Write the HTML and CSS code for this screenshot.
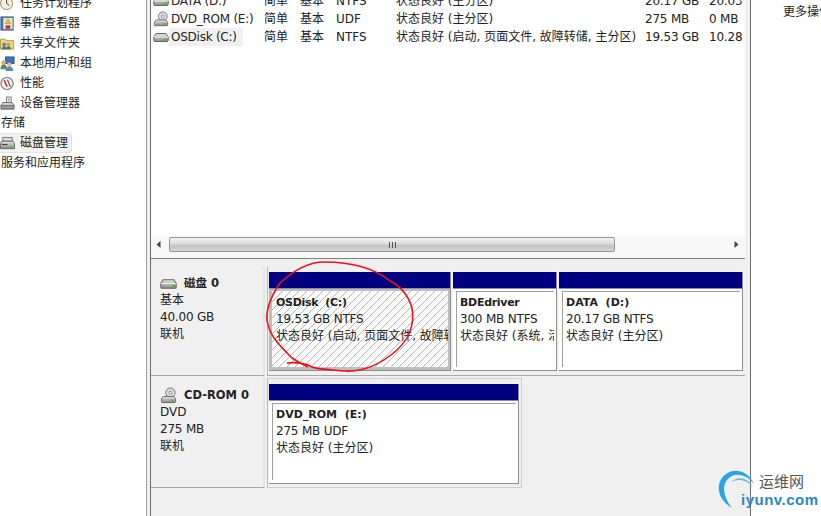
FILE: index.html
```html
<!DOCTYPE html>
<html lang="zh-CN">
<head>
<meta charset="utf-8">
<title>磁盘管理</title>
<link rel="stylesheet" href="styles.css">
</head>
<body>
<svg class="defs" width="0" height="0" aria-hidden="true">
  <defs>
    <linearGradient id="hdd" x1="0" y1="0" x2="0" y2="1">
      <stop offset="0" stop-color="#e8e8e8"/><stop offset=".5" stop-color="#b8b8b8"/><stop offset="1" stop-color="#8a8a8a"/>
    </linearGradient>
    <symbol id="disk" viewBox="0 0 16 16">
      <path d="M3 4.500h10l2.200 3.500v3.500a1 1 0 0 1-1 1H1.800a1 1 0 0 1-1-1V8z" fill="url(#hdd)" stroke="#666"/>
      <path d="M1 8h14" stroke="#f4f4f4"/>
      <rect x="11" y="9.500" width="3" height="2" fill="#5cb82c"/>
    </symbol>
    <symbol id="cdrom" viewBox="0 0 16 18">
      <circle cx="10" cy="6" r="5" fill="#dcd6e6" stroke="#777"/>
      <circle cx="10" cy="6" r="1.500" fill="#fff" stroke="#888"/>
      <path d="M2.500 10h11l2 2.500v3a1 1 0 0 1-1 1h-13a1 1 0 0 1-1-1v-3z" fill="url(#hdd)" stroke="#666"/>
      <rect x="11" y="13.500" width="3" height="2" fill="#5cb82c"/>
    </symbol>
  </defs>
</svg>

<div class="app">
  <nav class="tree">
    <div class="tree-row">
      <svg class="tree-icon" viewBox="0 0 16 16"><circle cx="7" cy="8" r="6.500" fill="#f5efd9" stroke="#8a8468"/><path d="M7 3.500V8l3 2" fill="none" stroke="#444"/></svg>
      <span>任务计划程序</span>
    </div>
    <div class="tree-row">
      <svg class="tree-icon" viewBox="0 0 16 16"><rect x="1" y="1" width="13" height="14" fill="#4a78b8" stroke="#34527c"/><rect x="3.500" y="2" width="10" height="12" fill="#e8e4d0"/><path d="M8.500 3l3 5h-6z" fill="#f2c21c" stroke="#a8851a" stroke-width=".5"/><rect x="6" y="10" width="5" height="3.500" fill="#c03030"/></svg>
      <span>事件查看器</span>
    </div>
    <div class="tree-row">
      <svg class="tree-icon" viewBox="0 0 16 16"><path d="M0.500 3.500h5l1 1.500h8v9h-14z" fill="#f0d680" stroke="#b49540"/><circle cx="4.500" cy="9" r="2" fill="#5f86b5"/><path d="M2 14c0-2 1-3 2.500-3S7 12 7 14z" fill="#4a6f9a"/><circle cx="9" cy="9" r="2" fill="#c9a15f"/><path d="M6.500 14c0-2 1-3 2.500-3s2.500 1 2.500 3z" fill="#3d7f55"/></svg>
      <span>共享文件夹</span>
    </div>
    <div class="tree-row">
      <svg class="tree-icon" viewBox="0 0 16 16"><rect x="6" y="1" width="9" height="7" fill="#3d74c4" stroke="#3c4f70"/><circle cx="4" cy="7" r="2.500" fill="#d6a878"/><path d="M0.500 14c0-3.500 1.500-5 3.500-5s3.500 1.500 3.500 5z" fill="#5a8a54"/><circle cx="10" cy="9.500" r="2.500" fill="#e2bd92"/><path d="M6 16c0-3.500 1.500-4.500 4-4.500s4 1 4 4.500z" fill="#5b84c0"/></svg>
      <span>本地用户和组</span>
    </div>
    <div class="tree-row">
      <svg class="tree-icon" viewBox="0 0 16 16"><circle cx="7.500" cy="8" r="6.500" fill="#f3f1ec" stroke="#8d8d8d" stroke-width="1.500"/><path d="M4.500 4.500l3 7" stroke="#c62020" stroke-width="1.500"/><path d="M8 4l3 7.500" stroke="#2a2a2a"/></svg>
      <span>性能</span>
    </div>
    <div class="tree-row">
      <svg class="tree-icon" viewBox="0 0 16 16"><rect x="7" y="1" width="5" height="6" fill="#e6efe6" stroke="#808080"/><path d="M9.500 2.500v3" stroke="#4aa04a"/><path d="M3 7h10l2 3v4H1v-4z" fill="url(#hdd)" stroke="#666"/><path d="M1 10.500h14" stroke="#555"/></svg>
      <span>设备管理器</span>
    </div>
    <div class="tree-row tree-root"><span>存储</span></div>
    <div class="tree-row">
      <div class="tree-chip">
        <svg class="tree-icon" viewBox="0 0 16 16"><rect x="3" y="1.500" width="10" height="4" fill="#ddd" stroke="#777"/><path d="M2 5.500h12l1.500 3v5h-15v-5z" fill="url(#hdd)" stroke="#666"/><path d="M2 9h6" stroke="#333"/><rect x="11" y="10.500" width="3" height="1.500" fill="#5cb82c"/></svg>
        <span>磁盘管理</span>
      </div>
    </div>
    <div class="tree-row tree-root"><span>服务和应用程序</span></div>
  </nav>

  <div class="splitter"></div>

  <main class="center">
    <section class="volumes">
      <div class="vol-row">
        <div class="vol-name"><svg class="vol-icon"><use href="#disk"/></svg><span class="vol-label">DATA (D:)</span></div>
        <span>简单</span><span>基本</span><span>NTFS</span><span>状态良好 (主分区)</span><span class="num">20.17 GB</span><span class="num clip">20.03 GB</span>
      </div>
      <div class="vol-row">
        <div class="vol-name"><svg class="vol-icon"><use href="#cdrom"/></svg><span class="vol-label">DVD_ROM (E:)</span></div>
        <span>简单</span><span>基本</span><span>UDF</span><span>状态良好 (主分区)</span><span class="num">275 MB</span><span class="num clip">0 MB</span>
      </div>
      <div class="vol-row">
        <div class="vol-name"><svg class="vol-icon"><use href="#disk"/></svg><span class="vol-label vol-current">OSDisk (C:)</span></div>
        <span>简单</span><span>基本</span><span>NTFS</span><span>状态良好 (启动, 页面文件, 故障转储, 主分区)</span><span class="num">19.53 GB</span><span class="num clip">10.28 GB</span>
      </div>
    </section>

    <div class="hscroll">
      <svg class="arrow" viewBox="0 0 5 7"><path d="M4.500 0v7L0.500 3.500z" fill="#444"/></svg>
      <div class="track">
        <div class="thumb"><span class="grip"></span></div>
      </div>
      <svg class="arrow" viewBox="0 0 5 7"><path d="M0.500 0v7l4-3.500z" fill="#444"/></svg>
    </div>

    <section class="disks">
      <div class="disk">
        <div class="disk-info">
          <div class="disk-title"><svg class="disk-icon"><use href="#disk"/></svg><b>磁盘 0</b></div>
          <div>基本</div><div class="num">40.00 GB</div><div>联机</div>
        </div>
        <div class="parts parts-full">
          <div class="part part-c selected">
            <div class="part-head"></div>
            <div class="part-body"><b class="tight">OSDisk&nbsp; (C:)</b><span class="num">19.53 GB NTFS</span><span>状态良好 (启动, 页面文件, 故障转储, 主分区)</span></div>
          </div>
          <div class="part part-b">
            <div class="part-head"></div>
            <div class="part-body"><b class="tight">BDEdriver</b><span class="num">300 MB NTFS</span><span>状态良好 (系统, 活动, 主分区)</span></div>
          </div>
          <div class="part part-d">
            <div class="part-head"></div>
            <div class="part-body"><b>DATA&nbsp; (D:)</b><span class="num">20.17 GB NTFS</span><span>状态良好 (主分区)</span></div>
          </div>
        </div>
      </div>
      <div class="disk disk-cd">
        <div class="disk-info">
          <div class="disk-title"><svg class="disk-icon"><use href="#cdrom"/></svg><b>CD-ROM 0</b></div>
          <div>DVD</div><div class="num">275 MB</div><div>联机</div>
        </div>
        <div class="parts parts-short">
          <div class="part part-e">
            <div class="part-head"></div>
            <div class="part-body"><b>DVD_ROM&nbsp; (E:)</b><span class="num">275 MB UDF</span><span>状态良好 (主分区)</span></div>
          </div>
        </div>
      </div>
    </section>
  </main>

  <div class="splitter-right"></div>

  <aside class="actions"><span>更多操作</span></aside>
</div>

<svg class="scribble" viewBox="0 0 160 116" aria-hidden="true">
  <path d="M25 105C33 104 40 105 46 107C52 111 60 111 83 113C100 114 118 107 135 92C150 78 152 62 150 50C146 36 138 28 128 23C112 10 88 4 62 4C44 4 30 14 18 25C8 40 4 52 5 62C7 76 14 84 30 100C36 104 40 106 46 109" fill="none" stroke="#e8141c" stroke-width="1.600"/>
</svg>

<div class="logo">
  <svg class="logo-arc" viewBox="0 0 42 42" aria-hidden="true">
    <path d="M38 16C33 4 20-1 10 6C0 13-1 30 16 40C9 31 5 20 11 12C18 3 31 6 38 16z" fill="#2ba3e6"/>
    <path d="M37 19C31 9 22 8 15 14C22 10 31 12 37 19z" fill="#5bb8e8"/>
  </svg>
  <div class="logo-cn">运维网</div>
  <div class="logo-en">iyunv.com</div>
</div>
</body>
</html>
```
FILE: styles.css
```css
html, body {
  margin: 0;
  height: 516px;
  overflow: hidden;
  background: #fff;
}
body {
  position: relative;
  font: 12px/17px "DejaVu Sans", "Noto Sans CJK SC", sans-serif;
  color: #222;
}
.defs { position: absolute; }
.app {
  display: flex;
  height: 516px;
}
.num { letter-spacing: -.2px; }

/* tree */
.tree {
  width: 146px;
  flex: none;
  margin-top: -7px;
  overflow: hidden;
}
.tree-row {
  height: 20px;
  display: flex;
  align-items: center;
  gap: 5px;
  white-space: nowrap;
}
.tree-root { padding-left: 1px; }
.tree-icon {
  width: 15px;
  height: 15px;
  flex: none;
}
.tree-chip {
  display: flex;
  align-items: center;
  gap: 5px;
  width: 72px;
  height: 20px;
  box-sizing: border-box;
  background: #f2f2f2;
  border: 1px solid #e2e2e2;
  border-left: 0;
  border-radius: 0 3px 3px 0;
}

.splitter {
  width: 5px;
  flex: none;
  box-sizing: border-box;
  background: #f0f0f0;
  border-left: 1px solid #a0a0a0;
  border-right: 1px solid #6d6d6d;
}
.splitter-right {
  width: 6px;
  flex: none;
  box-sizing: border-box;
  background: #f0f0f0;
  border-right: 1px solid #6d6d6d;
}

/* center */
.center {
  width: 594px;
  flex: none;
  display: flex;
  flex-direction: column;
  background: #f0f0f0;
}
.volumes {
  height: 244px;
  flex: none;
  box-sizing: border-box;
  margin-top: -8px;
  padding-left: 2px;
  background: #fff;
  overflow: hidden;
}
.vol-row {
  display: grid;
  grid-template-columns: 111px 36px 36px 60px 249px 64px 36px;
  height: 18px;
  align-items: center;
  white-space: nowrap;
}
.vol-name {
  display: flex;
  align-items: center;
  gap: 2px;
  height: 18px;
}
.vol-icon {
  width: 16px;
  height: 16px;
  flex: none;
}
.vol-label {
  padding: 0 6px 0 2px;
  line-height: 18px;
  margin-left: -2px;
  letter-spacing: -.25px;
}
.vol-current {
  background: #f0f0f0;
}
.clip { overflow: hidden; }

.hscroll {
  height: 23px;
  flex: none;
  box-sizing: border-box;
  display: flex;
  align-items: flex-start;
  padding: 1px 0 0 0;
  background: #f8f8f8;
  border-bottom: 1px solid #7e7e7e;
}
.arrow {
  width: 5px;
  height: 7px;
  flex: none;
  margin: 4px 6px 0;
}
.arrow:first-child { margin-left: 5px; }
.track {
  flex: 1;
  padding-left: 2px;
}
.thumb {
  width: 446px;
  height: 15px;
  box-sizing: border-box;
  border: 1px solid #979797;
  border-radius: 2px;
  background: linear-gradient(#f4f4f4, #dcdcdc 45%, #c6c6c6 55%, #d2d2d2);
  display: flex;
  align-items: center;
  justify-content: center;
}
.grip {
  width: 7px;
  height: 6px;
  background: repeating-linear-gradient(90deg, #555 0 1px, transparent 1px 3px);
}

/* disks */
.disks {
  flex: 1;
  padding-top: 8px;
  display: flex;
  flex-direction: column;
  gap: 2px;
}
.disk {
  display: flex;
  height: 109px;
  flex: none;
}
.disk-cd { height: 110px; }
.disk-info {
  width: 114px;
  flex: none;
  box-sizing: border-box;
  padding: 8px 0 0 9px;
  border-bottom: 1px solid #a8a8a8;
  border-right: 2px solid #e4e4e4;
  background: #f0f0f0;
  color: #222;
  line-height: 17px;
}
.disk-cd .disk-info { padding-top: 9px; }
.disk-title {
  display: flex;
  align-items: center;
  gap: 7px;
  height: 17px;
}
.disk-title b { font-size: 11.5px; }
.disk-icon {
  width: 17px;
  height: 17px;
  flex: none;
}
.parts {
  display: flex;
  box-sizing: border-box;
  margin-left: 2px;
  padding: 5px 0 4px 1px;
  border-left: 1px solid #b8b8b8;
}
.parts-full {
  flex: 1;
  border-bottom: 1px solid #a8a8a8;
}
.parts-short {
  width: 255px;
  padding-right: 3px;
  border-top: 1px solid #cfcfcf;
  border-right: 1px solid #cfcfcf;
  border-bottom: 1px solid #cfcfcf;
}
.part {
  display: flex;
  flex-direction: column;
  flex: none;
  height: 99px;
  box-sizing: border-box;
  border-right: 1px solid #8e8e8e;
  border-bottom: 1px solid #8e8e8e;
  background: #fff;
  margin-right: 2px;
}
.part-c { width: 182px; }
.part-b { width: 104px; }
.part-d { width: 184px; margin-right: 0; }
.part-e { width: 250px; height: 100px; margin-right: 0; }
.part-head {
  height: 16px;
  flex: none;
  background: #000080;
  border-bottom: 1px solid #8e8e8e;
}
.part-body {
  flex: 1;
  min-height: 0;
  display: flex;
  flex-direction: column;
  box-sizing: border-box;
  margin: 2px 2px 3px 3px;
  padding: 2px 0 0 3px;
  border-top: 1px solid #a0a0a0;
  border-left: 1px solid #a0a0a0;
  overflow: hidden;
  white-space: nowrap;
  line-height: 17px;
}
.part-body b {
  font-size: 11px;
  overflow: hidden;
}
.part-body b.tight { letter-spacing: -.3px; }
.part-body span { overflow: hidden; }
.selected { background: #bdbdbd; }
.selected .part-body {
  border: 0;
  padding: 3px 0 0 4px;
  background: repeating-linear-gradient(-45deg, #b4b4b4 0 1px, #fff 1px 5.66px);
}

/* actions */
.actions {
  flex: 1;
  padding: 4px 0 0 32px;
  white-space: nowrap;
  overflow: hidden;
}

/* overlays */
.scribble {
  position: absolute;
  left: 262px;
  top: 258px;
  width: 160px;
  height: 116px;
}
.logo {
  position: absolute;
  left: 716px;
  top: 468px;
  width: 105px;
  height: 46px;
}
.logo-arc {
  position: absolute;
  left: 0;
  top: 0;
  width: 42px;
  height: 42px;
}
.logo-cn {
  position: absolute;
  left: 43px;
  top: 4px;
  font: 15px/18px "Noto Sans CJK SC", sans-serif;
  color: #555;
}
.logo-en {
  position: absolute;
  left: 25px;
  top: 23px;
  font: bold 15px/18px "Liberation Sans", sans-serif;
  letter-spacing: .5px;
  color: #2a86c8;
}
```
